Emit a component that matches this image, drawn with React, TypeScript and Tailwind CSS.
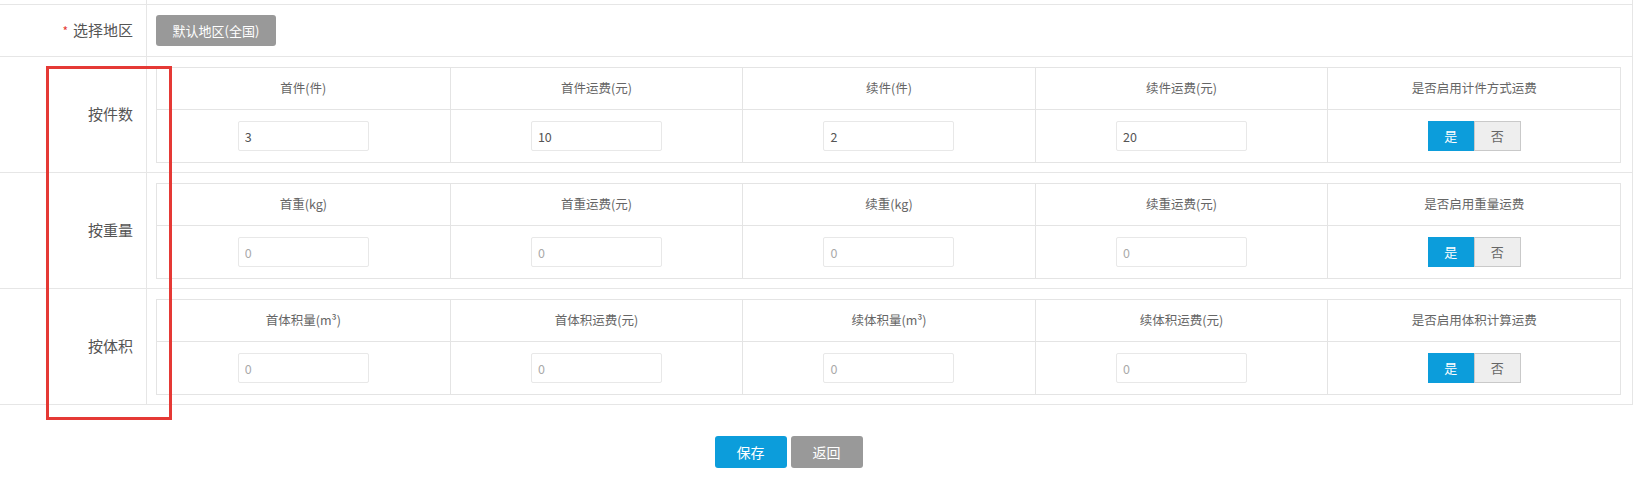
import React from "react";

type Section = {
  label: string;
  headers: string[];
  values: string[];
  placeholder: boolean;
};

const sections: Section[] = [
  {
    label: "按件数",
    headers: ["首件(件)", "首件运费(元)", "续件(件)", "续件运费(元)", "是否启用计件方式运费"],
    values: ["3", "10", "2", "20"],
    placeholder: false,
  },
  {
    label: "按重量",
    headers: ["首重(kg)", "首重运费(元)", "续重(kg)", "续重运费(元)", "是否启用重量运费"],
    values: ["0", "0", "0", "0"],
    placeholder: true,
  },
  {
    label: "按体积",
    headers: ["首体积量(m³)", "首体积运费(元)", "续体积量(m³)", "续体积运费(元)", "是否启用体积计算运费"],
    values: ["0", "0", "0", "0"],
    placeholder: true,
  },
];

const YesNo = () => (
  <div className="flex h-[30px] text-[13px]">
    <button className="w-[46px] h-full bg-[#0c9ddb] text-white">是</button>
    <button className="w-[47px] h-full bg-[#eeeeee] border border-[#c9c9c9] text-[#666]">否</button>
  </div>
);

const App: React.FC = () => {
  return (
    <div
      className="relative w-[1635px] h-[486px] bg-white text-[#555]"
      style={{ fontFamily: '"Noto Sans CJK SC", "Microsoft YaHei", "Liberation Sans", sans-serif' }}
    >
      <div className="w-[1633px] border-r border-[#e6e6e6]">
        {/* cut off row above */}
        <div className="flex h-[4px]">
          <div className="w-[147px] border-r border-[#e6e6e6]" />
        </div>

        {/* 选择地区 */}
        <div className="flex border-t border-[#e6e6e6]">
          <div className="w-[147px] shrink-0 border-r border-[#e6e6e6] flex items-center justify-end pr-[13px] text-[15px]">
            <span className="text-[#e53935] mr-[5px] text-[12px]">*</span>
            选择地区
          </div>
          <div className="flex-1 px-[9px] py-[10px]">
            <button className="w-[120px] h-[31px] rounded-[3px] bg-[#999999] text-white text-[13px]">
              默认地区(全国)
            </button>
          </div>
        </div>

        {sections.map((s) => (
          <div key={s.label} className="flex border-t border-[#e6e6e6]">
            <div className="w-[147px] shrink-0 border-r border-[#e6e6e6] flex items-center justify-end pr-[13px] text-[15px]">
              {s.label}
            </div>
            <div className="flex-1 pl-[9px] pr-[11px] pt-[10px] pb-[9px]">
              <div className="grid grid-cols-5 border border-[#e4e4e4]">
                {s.headers.map((h, i) => (
                  <div key={h} className={i > 0 ? "border-l border-[#e4e4e4]" : ""}>
                    <div className="h-[42px] border-b border-[#e4e4e4] flex items-center justify-center text-[12.5px] text-[#666]">
                      {h}
                    </div>
                    <div className="h-[52px] flex items-center justify-center">
                      {i < 4 ? (
                        s.placeholder ? (
                          <input
                            readOnly
                            placeholder={s.values[i]}
                            className="w-[131px] h-[30px] border border-[#e8e8e8] rounded-[2px] px-[6px] text-[12.5px] text-[#555] placeholder:text-[#aaa] outline-none"
                          />
                        ) : (
                          <input
                            readOnly
                            defaultValue={s.values[i]}
                            className="w-[131px] h-[30px] border border-[#e8e8e8] rounded-[2px] px-[6px] text-[12.5px] text-[#555] outline-none"
                          />
                        )
                      ) : (
                        <YesNo />
                      )}
                    </div>
                  </div>
                ))}
              </div>
            </div>
          </div>
        ))}
        <div className="border-t border-[#e6e6e6]" />
      </div>

      {/* actions */}
      <div className="flex justify-center gap-[4px] mt-[31px] pr-[58px]">
        <button className="w-[72px] h-[32px] rounded-[3px] bg-[#0c9ddb] text-white text-[14px]">保存</button>
        <button className="w-[72px] h-[32px] rounded-[3px] bg-[#999999] text-white text-[14px]">返回</button>
      </div>

      {/* annotation */}
      <div className="absolute left-[46px] top-[66px] w-[126px] h-[354px] border-[3px] border-[#e53935]" />
    </div>
  );
};

export default App;
